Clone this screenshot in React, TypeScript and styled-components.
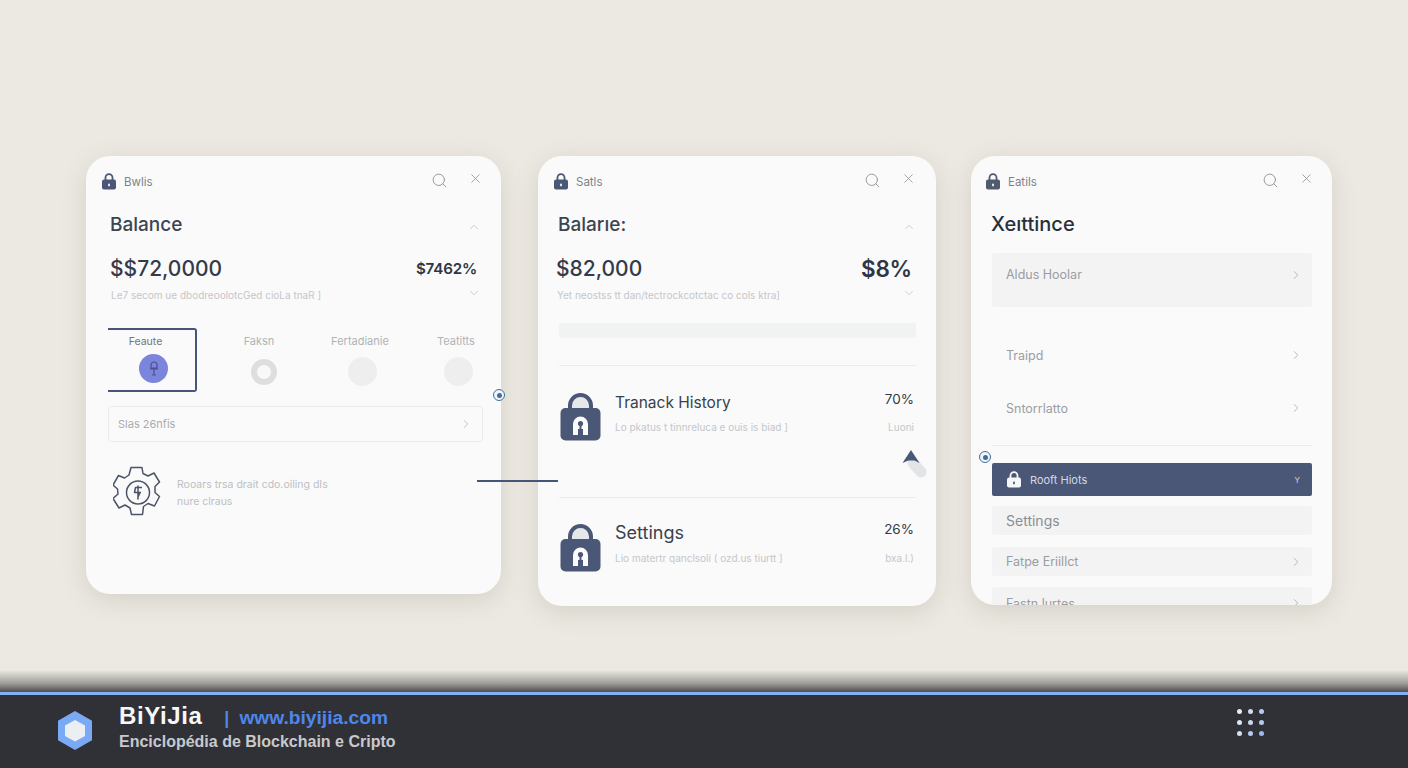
import React from "react";
import styled, { createGlobalStyle } from "styled-components";
import { Search, X, ChevronUp, ChevronDown, ChevronRight } from "lucide-react";

const Global = createGlobalStyle`
  html, body { margin: 0; padding: 0; }
  body { font-family: Inter, "Noto Sans", sans-serif; background: #ece9e2; }
  * { box-sizing: border-box; }
`;

const NAVY = "#4b5777";

const Page = styled.div`
  width: 1408px;
  height: 768px;
  display: flex;
  flex-direction: column;
  overflow: hidden;
  background: #ece9e2;
`;
const Stage = styled.main`
  position: relative;
  height: 670px;
  flex: none;
  padding: 156px 0 0 86px;
  display: flex;
  align-items: flex-start;
`;
const Card = styled.section<{ $w: number; $h: number; $mr?: number; $pl?: number }>`
  position: relative;
  flex: none;
  width: ${(p) => p.$w}px;
  height: ${(p) => p.$h}px;
  margin-right: ${(p) => p.$mr ?? 0}px;
  padding-left: ${(p) => p.$pl ?? 20}px;
  padding-right: 20px;
  border-radius: 24px;
  background: #fafafa;
  box-shadow: 0 6px 24px rgba(120, 115, 100, 0.2);
`;
const ClipCard = styled(Card)`
  overflow: hidden;
`;
const Head = styled.header<{ $ml: number }>`
  height: 50px;
  margin-left: ${(p) => p.$ml}px;
  display: flex;
  align-items: center;
  gap: 7px;
  color: #7c828c;
  font-size: 11.5px;
  padding-top: 1px;
`;
const HeadTools = styled.div<{ $mr: number }>`
  margin-left: auto;
  margin-right: ${(p) => p.$mr}px;
  display: flex;
  align-items: center;
  gap: 20px;
  color: #8e9298;
  margin-top: -3px;
  & > svg:last-child {
    margin-top: -3px;
  }
`;
const TitleRow = styled.div`
  height: 36px;
  display: flex;
  align-items: center;
  justify-content: space-between;
  color: #b4b7bb;
  & > svg {
    margin-top: 5px;
  }
`;
const Title = styled.h2<{ $ml: number }>`
  margin: 0 0 0 ${(p) => p.$ml}px;
  font-size: 19px;
  font-weight: 500;
  color: #3c4452;
`;
const DarkTitle = styled(Title)`
  color: #27303c;
  font-size: 20px;
`;
const AmountRow = styled.div`
  height: 36px;
  margin-top: 8px;
  display: flex;
  align-items: center;
  justify-content: space-between;
`;
const Amount = styled.div<{ $ml: number }>`
  margin-left: ${(p) => p.$ml}px;
  font-size: 21px;
  font-weight: 500;
  color: #333b49;
`;
const Percent = styled.div<{ $size: number; $mr: number }>`
  margin-right: ${(p) => p.$mr}px;
  font-size: ${(p) => p.$size}px;
  font-weight: 600;
  letter-spacing: -0.2px;
  color: #2e3644;
`;
const SubRow = styled.div`
  height: 18px;
  display: flex;
  align-items: center;
  justify-content: space-between;
  color: #b9bcc0;
  & > svg {
    margin-top: -4px;
  }
`;
const Faint = styled.span`
  font-size: 10px;
  color: #c5c7cb;
  white-space: nowrap;
`;
const SubText = styled(Faint)<{ $ml: number }>`
  margin-left: ${(p) => p.$ml}px;
`;
const Tabs = styled.div`
  margin-top: 24px;
  display: flex;
  height: 64px;
`;
const ActiveTab = styled.div`
  flex: none;
  width: 89px;
  margin-right: 13px;
  border: 2px solid #46557a;
  border-left: none;
  border-radius: 0 3px 3px 0;
  display: flex;
  flex-direction: column;
  align-items: center;
  padding-top: 5px;
  gap: 6px;
  font-size: 10.5px;
  color: #6e747e;
`;
const ActiveLabel = styled.span`
  margin-right: 12px;
`;
const Tab = styled.div<{ $w: number }>`
  flex: none;
  width: ${(p) => p.$w}px;
  display: flex;
  flex-direction: column;
  align-items: center;
  padding-top: 6px;
  gap: 11px;
  font-size: 11px;
  color: #b0b3b8;
`;
const ActiveDot = styled.div`
  width: 29px;
  height: 29px;
  margin-left: 4px;
  border-radius: 50%;
  background: #7b85dc;
  display: flex;
  align-items: center;
  justify-content: center;
`;
const Dot = styled.div<{ $ring?: boolean }>`
  width: ${(p) => (p.$ring ? 26 : 29)}px;
  height: ${(p) => (p.$ring ? 26 : 29)}px;
  margin-top: ${(p) => (p.$ring ? 0 : -2)}px;
  margin-left: ${(p) => (p.$ring ? 10 : 4)}px;
  border-radius: 50%;
  background: ${(p) => (p.$ring ? "#f8f8f8" : "#eeeeee")};
  border: ${(p) => (p.$ring ? "6px solid #dedede" : "none")};
`;
const LinkBox = styled.div`
  margin: 14px -2px 0 0;
  height: 36px;
  border: 1px solid #ebebeb;
  border-radius: 3px;
  padding: 0 9px 0 9px;
  display: flex;
  align-items: center;
  justify-content: space-between;
  font-size: 11px;
  color: #a9acb1;
`;
const GearRow = styled.div`
  margin: 24px 0 0 5px;
  display: flex;
  align-items: center;
  gap: 16px;
`;
const GearText = styled.p`
  margin: 0;
  font-size: 10.5px;
  line-height: 17px;
  color: #bdbfc3;
  white-space: nowrap;
`;
const Bar = styled.div`
  margin-top: 19px;
  height: 15px;
  border-radius: 2px;
  background: #f1f2f2;
`;
const Rule = styled.hr<{ $mt: number }>`
  margin: ${(p) => p.$mt}px 0 0;
  border: none;
  border-top: 1px solid #ececec;
`;
const HistoryRow = styled.div<{ $mt: number }>`
  margin-top: ${(p) => p.$mt}px;
  margin-left: 1px;
  margin-right: 2px;
  display: flex;
  align-items: flex-start;
  gap: 14px;
`;
const HistoryBody = styled.div`
  flex: 1;
  display: flex;
  flex-direction: column;
`;
const HistoryLine = styled.div<{ $h: number }>`
  height: ${(p) => p.$h}px;
  display: flex;
  align-items: center;
  justify-content: space-between;
`;
const HistoryTitle = styled.span<{ $size: number }>`
  font-size: ${(p) => p.$size}px;
  color: #39414d;
`;
const HistoryPct = styled.span`
  font-size: 13.5px;
  color: #333a46;
  margin-top: -6px;
`;
const MenuBlock = styled.div<{ $h: number; $mt: number; $flat?: boolean; $align?: string; $pt?: number }>`
  height: ${(p) => p.$h}px;
  margin-top: ${(p) => p.$mt}px;
  padding: ${(p) => p.$pt ?? 0}px 9px 0 14px;
  background: ${(p) => (p.$flat ? "transparent" : "#f3f3f3")};
  border-radius: 2px;
  display: flex;
  align-items: ${(p) => p.$align ?? "center"};
  justify-content: space-between;
  font-size: 12.5px;
  color: #9a9da2;
`;
const TopBlockText = styled.div`
  display: flex;
  width: 100%;
  justify-content: space-between;
  align-items: center;
  margin-top: 14px;
`;
const NavyBar = styled.div`
  margin-top: 17px;
  height: 33px;
  background: ${NAVY};
  border-radius: 2px;
  padding: 0 12px 0 14px;
  display: flex;
  align-items: center;
  gap: 8px;
  font-size: 11px;
  color: #d5d9e2;
`;
const NavyMark = styled.span`
  margin-left: auto;
  color: #d5d9e2;
  font-size: 8px;
`;
const SettingsLabel = styled.span`
  font-size: 14px;
  color: #8a8e94;
`;
const Connector = styled.div`
  position: absolute;
  left: 477px;
  top: 480px;
  width: 81px;
  height: 2px;
  background: #46557a;
`;
const Pin = styled.div<{ $x: number; $y: number }>`
  position: absolute;
  left: ${(p) => p.$x}px;
  top: ${(p) => p.$y}px;
  width: 12px;
  height: 12px;
  border-radius: 50%;
  border: 1.5px solid #3f6f9c;
  background: #f2f5f7;
  display: flex;
  align-items: center;
  justify-content: center;
  &::after {
    content: "";
    width: 5px;
    height: 5px;
    border-radius: 50%;
    background: #3f6f9c;
  }
`;
const Pointer = styled.svg`
  position: absolute;
  left: 901px;
  top: 448px;
`;
const Shade = styled.div`
  flex: none;
  height: 22px;
  background: linear-gradient(to bottom, rgba(90, 90, 88, 0), rgba(85, 85, 84, 0.5) 60%, #4d4d4e);
`;
const Footer = styled.footer`
  flex: none;
  height: 76px;
  background: #303137;
  border-top: 3px solid #84aff2;
  display: flex;
  align-items: center;
  padding: 0 143px 0 58px;
  font-family: "Liberation Sans", Arial, sans-serif;
`;
const Logo = styled.svg`
  margin-top: -2px;
`;
const Brand = styled.div`
  margin-left: 27px;
  margin-top: -10px;
  display: flex;
  flex-direction: column;
  gap: 3px;
`;
const BrandTop = styled.div`
  display: flex;
  align-items: baseline;
`;
const BrandName = styled.span`
  font-size: 24px;
  line-height: 28px;
  font-weight: 700;
  letter-spacing: 0.6px;
  color: #f7f7f7;
`;
const BrandBar = styled.span`
  margin-left: 22px;
  font-size: 18px;
  font-weight: 700;
  color: #4f86ea;
`;
const BrandUrl = styled.span`
  margin-left: 10px;
  font-size: 19.2px;
  font-weight: 700;
  color: #4f86ea;
`;
const BrandSub = styled.span`
  font-size: 16px;
  line-height: 18px;
  font-weight: 700;
  color: #c8c9cd;
`;
const Grid = styled.div`
  margin-left: auto;
  margin-top: -19px;
  margin-right: 1px;
  display: grid;
  grid-template-columns: repeat(3, 5px);
  gap: 6px;
`;
const GridDot = styled.i<{ $c: string }>`
  width: 5px;
  height: 5px;
  border-radius: 50%;
  background: ${(p) => p.$c};
`;

const SmallLock = ({ color = NAVY, hole = "#fbfbfb" }: { color?: string; hole?: string }) => (
  <svg width="16" height="17" viewBox="0 0 16 17">
    <path d="M4.500 7V4.600a3.500 3.500 0 0 1 7 0V7" fill="none" stroke={color} strokeWidth="1.800" />
    <rect x="1" y="6.500" width="14" height="10" rx="2" fill={color} />
    <rect x="7.100" y="10.500" width="1.800" height="2.800" rx=".9" fill={hole} />
  </svg>
);

const BigLock = () => (
  <svg width="41" height="49" viewBox="0 0 41 49">
    <path d="M10 18V13.500a10.500 10.500 0 0 1 21 0V18" fill="#e6e7ea" stroke={NAVY} strokeWidth="4" />
    <rect x="0.500" y="16" width="40" height="32.500" rx="5" fill={NAVY} />
    <path d="M13 43V32a7.500 7.500 0 0 1 15 0v11h-5v-6h-5v6z" fill="#fbfbfb" />
    <circle cx="20.500" cy="31.500" r="2.600" fill={NAVY} />
    <rect x="19.500" y="32" width="2" height="6" fill={NAVY} />
  </svg>
);

const Gear = () => (
  <svg width="48" height="53" viewBox="0 0 48 53" fill="none" stroke="#4a5568" strokeWidth="1.500" strokeLinejoin="round">
    <path d="M18 1.500h11l1 6 5 2.500 6-3 5.500 9-4.500 4.500 0 6 4.500 4-5 9.500-6.500-2.500-4.500 3-1 8h-11l-1.500-6.500-5-3-6 3-6-9.500 5-4.500-.5-5-4.500-4 5.500-9.500 6 2.500 4.500-3z" />
    <circle cx="25" cy="26.500" r="11.500" />
    <path d="M29 21.500h-6.500l-1 5h5.500l-2.500 6M21 26.500h7M25 19.500v14" />
  </svg>
);

const Icons = () => (
  <>
    <Search size={17} strokeWidth={1.3} />
    <X size={15} strokeWidth={1.3} />
  </>
);

const navDots = ["#e8eaee", "#d3dcec", "#b7cbef", "#dfe5f0", "#ccd8ec", "#b5c9ee", "#d5dff2", "#b6cbf2", "#9dbbf0"];

export default function App() {
  return (
    <Page>
      <Global />
      <Stage>
        <Card $w={415} $h={438} $mr={37} $pl={22}>
          <Head $ml={-7}>
            <SmallLock />
            <span>Bwlis</span>
            <HeadTools $mr={-2}>
              <Icons />
            </HeadTools>
          </Head>
          <TitleRow>
            <Title $ml={2}>Balance</Title>
            <ChevronUp size={14} strokeWidth={1.2} />
          </TitleRow>
          <AmountRow>
            <Amount $ml={2}>$$72,0000</Amount>
            <Percent $size={15.2} $mr={4}>
              $7462%
            </Percent>
          </AmountRow>
          <SubRow>
            <SubText $ml={3}>Le7 secom ue dbodreoolotcGed cioLa tnaR ]</SubText>
            <ChevronDown size={14} strokeWidth={1.2} />
          </SubRow>
          <Tabs>
            <ActiveTab>
              <ActiveLabel>Feaute</ActiveLabel>
              <ActiveDot>
                <svg width="10" height="15" viewBox="0 0 10 15" fill="none" stroke="#4a5290" strokeWidth="1.200">
                  <path d="M5 1a3 3 0 0 1 3 3v3H2V4a3 3 0 0 1 3-3zM1 8h8M5 8v6M3 14h4" />
                </svg>
              </ActiveDot>
            </ActiveTab>
            <Tab $w={98}>
              <span>Faksn</span>
              <Dot $ring />
            </Tab>
            <Tab $w={104}>
              <span>Fertadianie</span>
              <Dot />
            </Tab>
            <Tab $w={88}>
              <span>Teatitts</span>
              <Dot />
            </Tab>
          </Tabs>
          <LinkBox>
            <span>Slas 26nfis</span>
            <ChevronRight size={14} strokeWidth={1.2} />
          </LinkBox>
          <GearRow>
            <Gear />
            <GearText>
              Rooars trsa drait cdo.oiling dIs
              <br />
              nure clraus
            </GearText>
          </GearRow>
        </Card>

        <Card $w={398} $h={450} $mr={35} $pl={21}>
          <Head $ml={-6}>
            <SmallLock />
            <span>Satls</span>
            <HeadTools $mr={0}>
              <Icons />
            </HeadTools>
          </Head>
          <TitleRow>
            <Title $ml={-1}>Balarıe:</Title>
            <ChevronUp size={14} strokeWidth={1.2} />
          </TitleRow>
          <AmountRow>
            <Amount $ml={-3}>$82,000</Amount>
            <Percent $size={22.5} $mr={4}>
              $8%
            </Percent>
          </AmountRow>
          <SubRow>
            <SubText $ml={-2}>Yet neostss tt dan/tectrockcotctac co cols ktra]</SubText>
            <ChevronDown size={14} strokeWidth={1.2} />
          </SubRow>
          <Bar />
          <Rule $mt={27} />
          <HistoryRow $mt={26}>
            <BigLock />
            <HistoryBody>
              <HistoryLine $h={20}>
                <HistoryTitle $size={15.5}>Tranack History</HistoryTitle>
                <HistoryPct>70%</HistoryPct>
              </HistoryLine>
              <HistoryLine $h={30}>
                <Faint>Lo pkatus t tinnreluca e ouis is biad ]</Faint>
                <Faint>Luoni</Faint>
              </HistoryLine>
            </HistoryBody>
          </HistoryRow>
          <Rule $mt={55} />
          <HistoryRow $mt={25}>
            <BigLock />
            <HistoryBody>
              <HistoryLine $h={18}>
                <HistoryTitle $size={18}>Settings</HistoryTitle>
                <HistoryPct>26%</HistoryPct>
              </HistoryLine>
              <HistoryLine $h={34}>
                <Faint>Lio matertr qanclsoli ( ozd.us tiurtt ]</Faint>
                <Faint>bxa.l.)</Faint>
              </HistoryLine>
            </HistoryBody>
          </HistoryRow>
        </Card>

        <ClipCard $w={361} $h={449} $pl={21}>
          <Head $ml={-7}>
            <SmallLock color="#515a6e" />
            <span>Eatils</span>
            <HeadTools $mr={-2}>
              <Icons />
            </HeadTools>
          </Head>
          <TitleRow>
            <DarkTitle $ml={-1}>Xeıttince</DarkTitle>
          </TitleRow>
          <MenuBlock $h={54} $mt={11} $align="flex-start">
            <TopBlockText>
              <span>Aldus Hoolar</span>
              <ChevronRight size={14} strokeWidth={1.2} />
            </TopBlockText>
          </MenuBlock>
          <MenuBlock $h={30} $mt={33} $flat>
            <span>Traipd</span>
            <ChevronRight size={14} strokeWidth={1.2} />
          </MenuBlock>
          <MenuBlock $h={30} $mt={23} $flat>
            <span>Sntorrlatto</span>
            <ChevronRight size={14} strokeWidth={1.2} />
          </MenuBlock>
          <Rule $mt={22} />
          <NavyBar>
            <SmallLock color="#f5f6f8" hole="#4b5777" />
            <span>Rooft Hiots</span>
            <NavyMark>Y</NavyMark>
          </NavyBar>
          <MenuBlock $h={29} $mt={10}>
            <SettingsLabel>Settings</SettingsLabel>
          </MenuBlock>
          <MenuBlock $h={29} $mt={12}>
            <span>Fatpe Eriillct</span>
            <ChevronRight size={14} strokeWidth={1.2} />
          </MenuBlock>
          <MenuBlock $h={29} $mt={11} $pt={3}>
            <span>Fastn lurtes</span>
            <ChevronRight size={14} strokeWidth={1.2} />
          </MenuBlock>
        </ClipCard>

        <Connector />
        <Pin $x={493} $y={389} />
        <Pin $x={979} $y={451} />
        <Pointer width="28" height="34" viewBox="0 0 28 34">
          <path d="M12 15l8 9" stroke="#e2e4e8" strokeWidth="11" strokeLinecap="round" />
          <path d="M1.500 15L10 2l8.500 13-5-2.500h-6z" fill={NAVY} />
        </Pointer>
      </Stage>
      <Shade />
      <Footer>
        <Logo width="34" height="39" viewBox="0 0 34 39">
          <path d="M17 0l17 9.700v19.600L17 39 0 29.300V9.700z" fill="#7aa9f6" />
          <path d="M17 9l10 5.500v10.500l-10 5.500-10-5.500V14.500z" fill="#eceff2" />
        </Logo>
        <Brand>
          <BrandTop>
            <BrandName>BiYiJia</BrandName>
            <BrandBar>|</BrandBar>
            <BrandUrl>www.biyijia.com</BrandUrl>
          </BrandTop>
          <BrandSub>Enciclopédia de Blockchain e Cripto</BrandSub>
        </Brand>
        <Grid>
          {navDots.map((c, i) => (
            <GridDot key={i} $c={c} />
          ))}
        </Grid>
      </Footer>
    </Page>
  );
}
